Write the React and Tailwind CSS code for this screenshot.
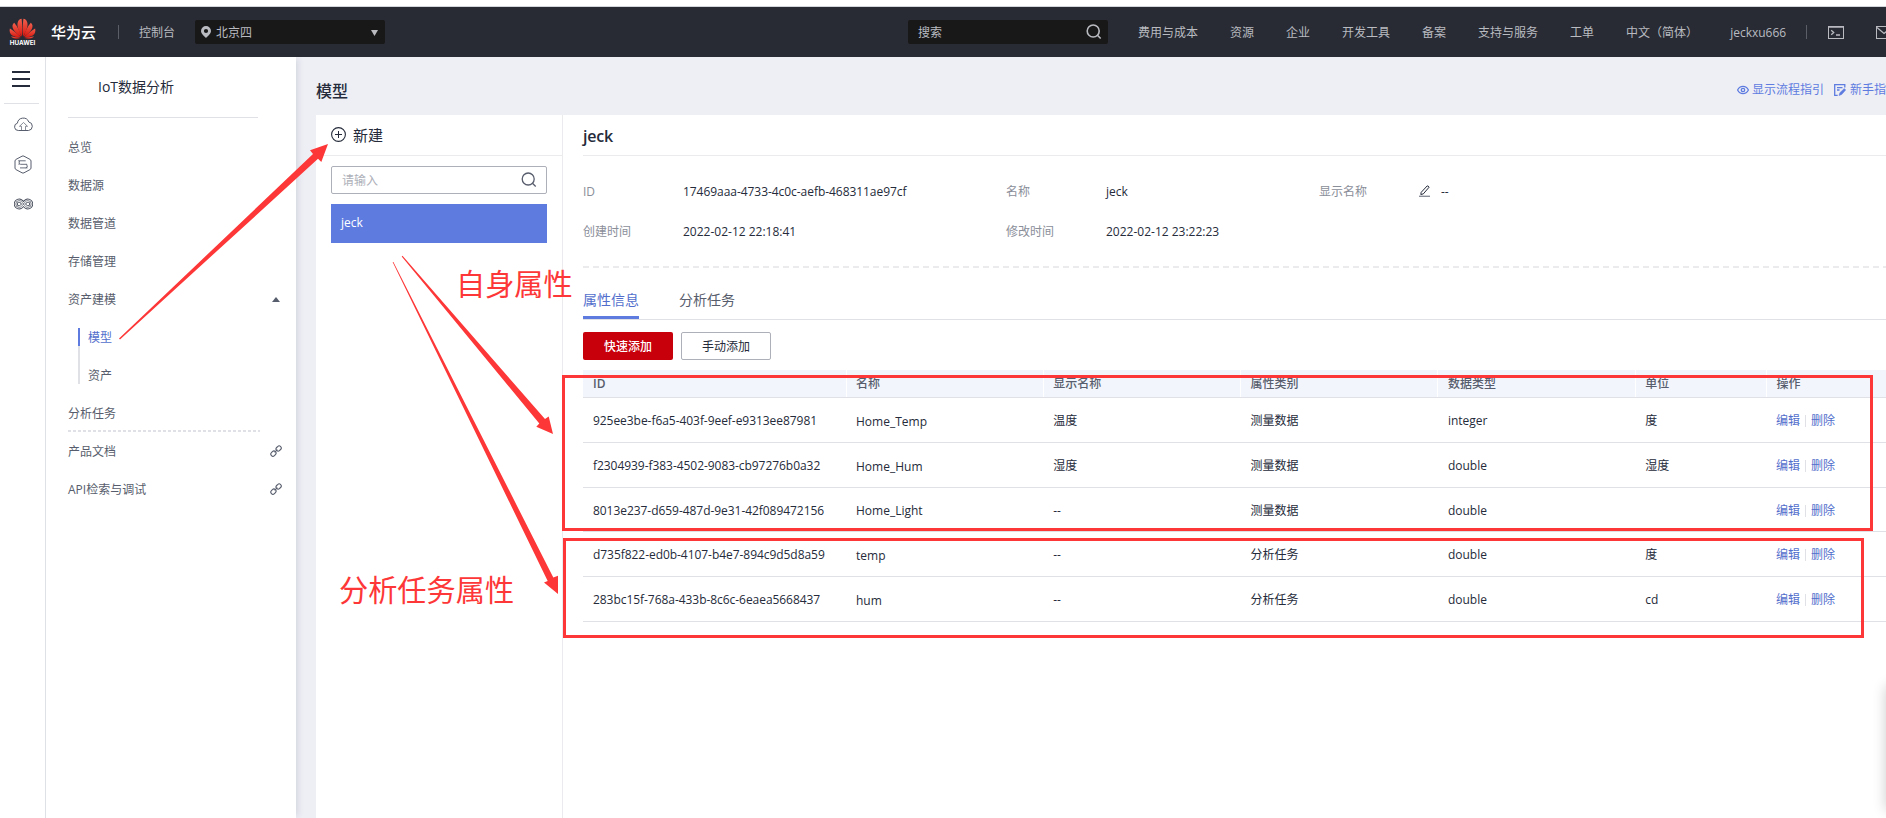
import React from "react";

const navItems = ["费用与成本", "资源", "企业", "开发工具", "备案", "支持与服务", "工单", "中文（简体）", "jeckxu666"];

const rows = [
  ["925ee3be-f6a5-403f-9eef-e9313ee87981", "Home_Temp", "温度", "测量数据", "integer", "度"],
  ["f2304939-f383-4502-9083-cb97276b0a32", "Home_Hum", "湿度", "测量数据", "double", "湿度"],
  ["8013e237-d659-487d-9e31-42f089472156", "Home_Light", "--", "测量数据", "double", ""],
  ["d735f822-ed0b-4107-b4e7-894c9d5d8a59", "temp", "--", "分析任务", "double", "度"],
  ["283bc15f-768a-433b-8c6c-6eaea5668437", "hum", "--", "分析任务", "double", "cd"],
];
const rowHeights = ["h-[45px]", "h-[45px]", "h-[44px]", "h-[45px]", "h-[45px]"];

function Logo() {
  return (
    <svg className="h-[21px] w-[27px]" viewBox="0 0 27 21">
      <defs>
        <linearGradient id="petal" x1="0" y1="0" x2="0" y2="1">
          <stop offset="0" stopColor="#f0604d" />
          <stop offset="1" stopColor="#d8160f" />
        </linearGradient>
      </defs>
      <g fill="url(#petal)">
        <path d="M13 18.5C9.5 13 7.6 7.5 8.8 4.2 9.4 2.3 10.8 1 12.6 .8 13.3 6 13.5 13 13 18.5z" />
        <path d="M14 18.5C17.5 13 19.4 7.5 18.2 4.2 17.6 2.3 16.2 1 14.4 .8 13.7 6 13.5 13 14 18.5z" />
        <path d="M12.3 18.7C11 14 8.5 8.5 5.2 4.8 3.2 6 3 8.7 4.2 11 5.7 14 8.8 17 12.3 18.7z" />
        <path d="M14.7 18.7C16 14 18.5 8.5 21.8 4.8 23.8 6 24 8.7 22.8 11 21.3 14 18.2 17 14.7 18.7z" />
        <path d="M11.8 19.3C9 16.5 5 13 .9 10.5 .1 13.5 1 16 3.3 17.4 5.6 18.8 8.8 19.4 11.8 19.3z" />
        <path d="M15.2 19.3C18 16.5 22 13 26.1 10.5 26.9 13.5 26 16 23.7 17.4 21.4 18.8 18.2 19.4 15.2 19.3z" />
        <path d="M11.4 19.9C8.6 19.5 5 19 2 18.6 3.3 20.6 7.5 21.3 11.4 19.9z" />
        <path d="M15.6 19.9C18.4 19.5 22 19 25 18.6 23.7 20.6 19.5 21.3 15.6 19.9z" />
      </g>
    </svg>
  );
}

function SearchIcon({ className }) {
  return (
    <svg className={className} viewBox="0 0 16 16" fill="none" stroke="currentColor">
      <circle cx="7.2" cy="7" r="6" />
      <path d="M11.7 11.5L14.7 14.5" />
    </svg>
  );
}

function LinkIcon() {
  return (
    <svg className="h-3 w-3" viewBox="0 0 12 12" fill="none" stroke="#575d6c" strokeWidth="1.1">
      <rect x="-2.7" y="-2" width="5.6" height="4.2" rx="2.1" transform="translate(8.5 3.5) rotate(-45)" />
      <rect x="-2.9" y="-2.1" width="5.6" height="4.2" rx="2.1" transform="translate(3.5 8.5) rotate(-45)" />
      <path d="M4.6 7.4L7.4 4.6" />
    </svg>
  );
}

function Header() {
  return (
    <header className="mt-1.5 flex h-[51px] shrink-0 items-center overflow-hidden border-t border-[#d3d7dc] bg-[#282b33] text-xs text-[#b9bbc1]">
      <div className="ml-[9px] flex w-[27px] shrink-0 flex-col items-center">
        <Logo />
        <span className="h-2 font-[Inter] text-[6.3px] font-bold leading-[9px] text-white">HUAWEI</span>
      </div>
      <span className="ml-[15px] w-[45px] shrink-0 whitespace-nowrap text-[15px] font-medium text-white">华为云</span>
      <span className="ml-[22px] h-3.5 w-px shrink-0 bg-[#5b5e66]" />
      <span className="ml-5 mt-[2px] w-9 shrink-0 whitespace-nowrap">控制台</span>
      <div className="ml-5 flex h-6 w-[190px] shrink-0 items-center rounded-[2px] bg-[#181818] pl-1.5 pr-[7px]">
        <svg className="h-3 w-[10px]" viewBox="0 0 10 12">
          <path fillRule="evenodd" fill="#b9bbc1" d="M5 0a5 5 0 0 0-5 4.9C0 7.7 3.2 10 5 12c1.8-2 5-4.3 5-7.1A5 5 0 0 0 5 0zm0 2.9a2.1 2.1 0 1 1 0 4.2 2.1 2.1 0 0 1 0-4.2z" />
        </svg>
        <span className="ml-[5px] mt-[2px]">北京四</span>
        <svg className="ml-auto mt-px h-1.5 w-[7px]" viewBox="0 0 7 6"><path d="M0 0h7L3.5 6z" fill="#b9bbc1" /></svg>
      </div>
      <div className="ml-[523px] flex h-6 w-[200px] shrink-0 items-center rounded-[2px] bg-[#181818] pl-2.5 pr-1.5">
        <span className="mt-[2px]">搜索</span>
        <SearchIcon className="ml-auto h-4 w-4 stroke-[1.6]" />
      </div>
      <nav className="ml-[30px] mt-[2px] flex shrink-0 gap-8 whitespace-nowrap">
        {navItems.map((n) => <span key={n}>{n}</span>)}
      </nav>
      <span className="ml-5 h-3.5 w-px shrink-0 bg-[#5b5e66]" />
      <svg className="ml-[21px] mt-px h-[13px] w-4 shrink-0" viewBox="0 0 16 13" fill="none" stroke="#b9bbc1">
        <rect x=".5" y=".5" width="15" height="12" />
        <path d="M0 1h16M3.2 4.3L5.7 6.5 3.2 8.7M8 9h4" strokeWidth="1.3" />
      </svg>
      <svg className="ml-8 h-[13px] w-4 shrink-0" viewBox="0 0 16 13" fill="none" stroke="#b9bbc1">
        <rect x=".5" y=".5" width="15" height="12" />
        <path d="M1 1.5L8 7.5 15 1.5" strokeWidth="1.3" />
      </svg>
    </header>
  );
}

const loop = "M9.5 6C7.8 3.7 6.8 2.6 5.2 2.6a3.4 3.4 0 0 0 0 6.8C8.8 9.4 10.2 2.6 13.8 2.6a3.4 3.4 0 0 1 0 6.8C12.2 9.4 11.2 8.3 9.5 6";

function Rail() {
  return (
    <aside className="flex w-[46px] shrink-0 flex-col border-r border-[#dfe1e6] bg-white">
      <div className="ml-3 mt-3.5 flex h-[16px] w-[18px] flex-col justify-between">
        <i className="h-[2px] bg-[#252b3a]" /><i className="h-[2px] bg-[#252b3a]" /><i className="h-[2px] bg-[#252b3a]" />
      </div>
      <div className="ml-1 mt-[16px] h-px w-[35px] bg-[#dfe1e6]" />
      <svg className="ml-3.5 mt-[13px] h-[15px] w-[19px]" viewBox="0 0 19 15" fill="none" stroke="#575d6c">
        <path d="M5 13.5H4.3a3.7 3.7 0 0 1-.9-7.3A5.9 5.9 0 0 1 14.8 5a4.3 4.3 0 0 1-.3 8.5H5z" />
        <path d="M9.500 5.500L5.500 9.300h2v4M9.500 5.500l4 3.800h-2v4" strokeWidth=".7" />
      </svg>
      <svg className="ml-3.5 mt-[23px] h-[19px] w-[18px]" viewBox="0 0 18 19" fill="none" stroke="#575d6c">
        <path d="M8 1.200Q9 .6 10 1.200L16 4.400Q17 5 17 6v7q0 1-1 1.600l-6 3.200q-1 .6-2 0L2 14.600Q1 14 1 13V6q0-1 1-1.600z" />
        <path d="M4.200 5.800h7.500M5.500 5.900q-1.500 3.300 1 3.400h6.500M12.800 9.400q1.400 3.400-1 3.500M4.500 9.300h1M6 12.900h7.500" strokeWidth=".9" />
      </svg>
      <svg className="ml-3.5 mt-6 h-3 w-[19px]" viewBox="0 0 19 12" fill="none">
        <path d={loop} stroke="#454b59" strokeWidth="4" />
        <path d={loop} stroke="#ffffff" strokeWidth="2.2" />
        <path d={loop} stroke="#454b59" strokeWidth=".7" />
      </svg>
    </aside>
  );
}

function MenuItem({ children, icon }) {
  return (
    <div className="flex h-[38px] items-center justify-between pl-[22px] pr-3.5">
      <span className="mt-[2px]">{children}</span>
      {icon}
    </div>
  );
}

function Sidebar() {
  return (
    <aside className="z-10 flex w-[250px] shrink-0 flex-col bg-white text-xs text-[#575d6c] shadow-[4px_0_6px_-2px_rgba(60,65,90,0.14)]">
      <h2 className="ml-[52px] mt-[19px] h-[22px] text-sm leading-[22px] text-[#252b3a]">IoT数据分析</h2>
      <div className="mb-[10px] ml-[22px] mt-[19px] h-px w-[190px] shrink-0 bg-[#dfe1e6]" />
      <MenuItem>总览</MenuItem>
      <MenuItem>数据源</MenuItem>
      <MenuItem>数据管道</MenuItem>
      <MenuItem>存储管理</MenuItem>
      <MenuItem icon={<svg className="mr-[2px] h-[5px] w-2" viewBox="0 0 8 5"><path d="M0 5L4 0l4 5z" fill="#575d6c" /></svg>}>资产建模</MenuItem>
      <div className="flex h-[76px] pl-8">
        <div className="mt-[10px] h-14 w-[2px] bg-[#dfe1e6]"><div className="h-[18px] bg-[#5e7ce0]" /></div>
        <div className="ml-2 flex flex-col">
          <span className="h-[38px] leading-[40px] text-[#526ecc]">模型</span>
          <span className="h-[38px] leading-[40px]">资产</span>
        </div>
      </div>
      <div className="flex h-[38px] flex-col justify-between pl-[22px]">
        <span className="h-[36px] leading-[40px]">分析任务</span>
        <span className="h-[2px] w-[192px] bg-[repeating-linear-gradient(90deg,#dfe1e6_0_3px,transparent_3px_5px)]" />
      </div>
      <MenuItem icon={<LinkIcon />}>产品文档</MenuItem>
      <MenuItem icon={<LinkIcon />}>API检索与调试</MenuItem>
    </aside>
  );
}

function Field({ label, children, width }) {
  return (
    <div className={"flex items-center pt-[2px] " + width}>
      <span className="w-[100px] shrink-0 text-[#8a8e99]">{label}</span>
      <span className="flex items-center whitespace-nowrap text-[#252b3a]">{children}</span>
    </div>
  );
}

const cols = "grid w-[1400px] grid-cols-[262.5px_197.2px_197.3px_197.4px_197.4px_131.2px_1fr]";

function Table() {
  return (
    <div className="mt-[10px] text-xs">
      <div className={cols + " h-7 border-b border-[#dfe1e6] bg-[#f2f5fc] font-medium text-[#575d6c]"}>
        {["ID", "名称", "显示名称", "属性类别", "数据类型", "单位", "操作"].map((h, i) => (
          <span key={h} className={"leading-[27px] " + (i ? "border-l border-white pl-[9.500px]" : "pl-2.5 font-semibold")}>{h}</span>
        ))}
      </div>
      {rows.map((r, i) => (
        <div key={r[0]} className={cols + " items-center border-b border-[#dfe1e6] pt-[2px] text-[#252b3a] " + rowHeights[i]}>
          {r.map((c, j) => (
            <span key={j} className={(j ? "pl-[10.5px]" : "pl-2.5 tracking-[-0.05px]") + (j === 1 && i !== 2 ? " pt-[2px]" : "")}>{c}</span>
          ))}
          <span className="flex items-center pl-[10px] text-[#526ecc]">
            编辑<i className="mx-[5px] h-3 w-px bg-[#dfe1e6]" />删除
          </span>
        </div>
      ))}
    </div>
  );
}

function Annotations() {
  return (
    <div className="pointer-events-none absolute inset-0 z-20 overflow-hidden text-[29.2px] leading-[40px] text-[#fd3737]">
      <div className="absolute left-[562px] top-[375px] h-[156px] w-[1311px] border-[3px] border-[#fd3737]" />
      <div className="absolute left-[563px] top-[538px] h-[100px] w-[1301px] border-[3px] border-[#fd3737]" />
      <svg className="absolute left-0 top-0 h-[818px] w-[600px]" viewBox="0 0 600 818" fill="#fd3737">
        <path d="M119 338.500L313 154 310 150.300 328 144 321.300 162 318 158.800 120 339.500z" />
        <path d="M401.700 256.400L539.300 423.500 536.300 426.700 553 434 548.700 416.500 545 419 402.500 255.800z" />
        <path d="M392.600 262L547.700 581 544 582.500 558 594 558 575.700 553.300 577.500 393.400 262z" />
      </svg>
      <span className="absolute left-[456px] top-[264px] whitespace-nowrap">自身属性</span>
      <span className="absolute left-[339px] top-[570px] whitespace-nowrap">分析任务属性</span>
    </div>
  );
}

export default function App() {
  return (
    <div className="relative flex h-[818px] w-[1886px] flex-col overflow-hidden bg-white font-['Open_Sans','Noto_Sans_CJK_SC',sans-serif]">
      <Header />
      <div className="flex min-h-0 flex-1">
        <Rail />
        <Sidebar />
        <main className="flex min-w-0 flex-1 flex-col overflow-hidden bg-[#eeeff5] pl-5">
          <div className="flex h-[58px] shrink-0 items-center pt-2.5">
            <h1 className="text-base font-medium text-[#252b3a]">模型</h1>
            <div className="mb-[2px] ml-auto flex w-[149px] shrink-0 items-center whitespace-nowrap text-xs text-[#5e7ce0]">
              <svg className="h-3 w-3 shrink-0" viewBox="0 0 12 12" fill="none" stroke="currentColor" strokeWidth="1.3">
                <path d="M.6 6C3 1.200 9 1.200 11.400 6 9 10.800 3 10.800 .6 6z" />
                <circle cx="6" cy="6" r="1.7" />
              </svg>
              <span className="ml-[3px]">显示流程指引</span>
              <svg className="ml-[10px] h-3 w-3 shrink-0" viewBox="0 0 12 12" fill="none" stroke="currentColor" strokeWidth="1.3">
                <path d="M10.800 3.500V.7H.7v10.600h3M3 3.600h5.500M3 6h2.500" />
                <path d="M10.300 4.500l1.400 1.400-4 4.600-2.700 1 .9-2.800z" fill="currentColor" strokeWidth=".5" />
              </svg>
              <span className="ml-1">新手指南</span>
            </div>
          </div>
          <div className="flex min-h-0 flex-1 bg-white">
            <section className="flex w-[247px] shrink-0 flex-col border-r border-[#ebebee]">
              <div className="flex h-[41px] items-center border-b border-[#ebebee] pl-[15px] text-[15px] text-[#252b3a]">
                <svg className="-mt-0.5 h-[15px] w-[15px]" viewBox="0 0 15 15" fill="none" stroke="#252b3a">
                  <circle cx="7.5" cy="7.5" r="6.9" strokeWidth="1.1" />
                  <path d="M7.500 4v7M4 7.500h7" />
                </svg>
                <span className="ml-[7px]">新建</span>
              </div>
              <div className="ml-[15px] mt-[10px] flex h-7 w-[216px] items-center rounded-[2px] border border-[#adb0b8] pl-2.5 pr-[9px] text-xs text-[#adb0b8]">
                <span className="mt-[2px]">请输入</span>
                <SearchIcon className="ml-auto h-4 w-4 stroke-[1.3] text-[#575d6c]" />
              </div>
              <div className="ml-[15px] mt-[10px] flex h-[39px] w-[216px] items-center bg-[#5e7ce0] pb-[2px] pl-2.5 text-xs text-white">jeck</div>
            </section>
            <section className="min-w-0 flex-1 overflow-hidden pl-5">
              <h2 className="h-[41px] border-b border-[#ebebee] text-base font-semibold leading-[42px] tracking-[-0.2px] text-[#252b3a]">jeck</h2>
              <div className="mt-[15px] flex h-10 text-xs">
                <Field label="ID" width="w-[423px]"><span className="tracking-[-0.05px]">17469aaa-4733-4c0c-aefb-468311ae97cf</span></Field>
                <Field label="名称" width="w-[313px]">jeck</Field>
                <Field label="显示名称" width="w-[200px]">
                  <svg className="mb-[2px] mr-[11px] h-3 w-[11px]" viewBox="0 0 11 12" fill="none" stroke="#252b3a">
                    <path d="M2.200 7.300L8.200 .9q1 -.3 1.900 1.300L4.300 8.900l-2.500.6z" />
                    <path d="M0 11.300h11" stroke="#8a8e99" strokeWidth="1.4" />
                  </svg>
                  --
                </Field>
              </div>
              <div className="flex h-10 text-xs">
                <Field label="创建时间" width="w-[423px]">2022-02-12 22:18:41</Field>
                <Field label="修改时间" width="w-[313px]">2022-02-12 23:22:23</Field>
              </div>
              <div className="mt-[15px] h-[2px] bg-[repeating-linear-gradient(90deg,#ebebee_0_6px,transparent_6px_10px)]" />
              <div className="mt-4 flex h-9 gap-10 border-b border-[#dfe1e6] text-sm leading-8 text-[#575d6c]">
                <span className="h-[35px] border-b-[3px] border-[#5e7ce0] text-[#526ecc]">属性信息</span>
                <span>分析任务</span>
              </div>
              <div className="mt-3 flex gap-2 text-xs">
                <button className="h-7 w-[90px] rounded-[2px] bg-[#c7000b] pt-[2px] font-medium text-white">快速添加</button>
                <button className="h-7 w-[90px] rounded-[2px] border border-[#adb0b8] pt-[2px] text-[#252b3a]">手动添加</button>
              </div>
              <Table />
            </section>
          </div>
        </main>
      </div>
      <div className="absolute left-[1886px] top-[686px] h-[124px] w-10 shadow-[0_0_14px_rgba(0,0,0,0.2)]" />
      <Annotations />
    </div>
  );
}
